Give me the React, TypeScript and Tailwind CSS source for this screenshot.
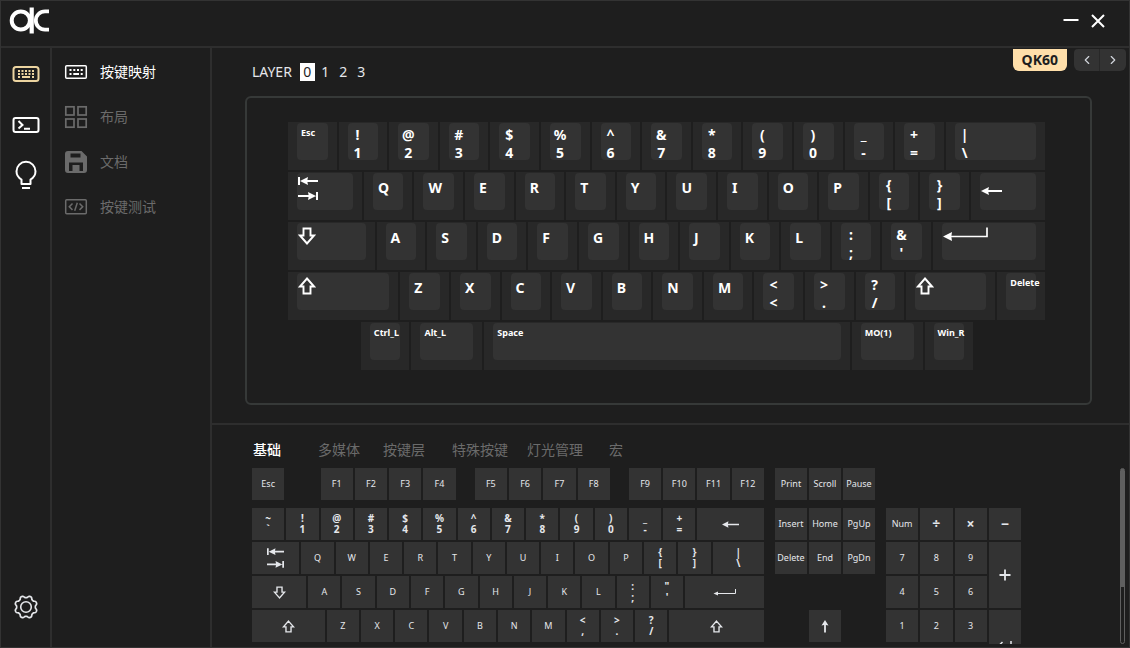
import { ReactNode, useState } from "react"
import clsx from "clsx"
import { ChevronLeft, ChevronRight } from "lucide-react"

type KeyDef = [legend: string, width?: number]

const layoutRows: KeyDef[][] = [
  [["Esc"], ["!\n1"], ["@\n2"], ["#\n3"], ["$\n4"], ["%\n5"], ["^\n6"], ["&\n7"], ["*\n8"], ["(\n9"], [")\n0"], ["_\n-"], ["+\n="], ["|\n\\", 2]],
  [["icon:tab", 1.5], ["Q"], ["W"], ["E"], ["R"], ["T"], ["Y"], ["U"], ["I"], ["O"], ["P"], ["{\n["], ["}\n]"], ["icon:back", 1.5]],
  [["icon:caps", 1.75], ["A"], ["S"], ["D"], ["F"], ["G"], ["H"], ["J"], ["K"], ["L"], [":\n;"], ["&\n'"], ["icon:enter", 2.25]],
  [["icon:shift", 2.22], ["Z"], ["X"], ["C"], ["V"], ["B"], ["N"], ["M"], ["<\n<"], [">\n."], ["?\n/"], ["icon:shift", 1.8], ["Delete", 0.98]],
  [["", 1.44], ["Ctrl_L"], ["Alt_L", 1.44], ["Space", 7.26], ["MO(1)", 1.44], ["Win_R"], ["", 1.42]],
]

const functionRow: KeyDef[] = [
  ["Esc"], ["", 1], ["F1"], ["F2"], ["F3"], ["F4"], ["", 0.5], ["F5"], ["F6"], ["F7"], ["F8"], ["", 0.5], ["F9"], ["F10"], ["F11"], ["F12"],
]

const mainRows: KeyDef[][] = [
  [["~\n`"], ["!\n1"], ["@\n2"], ["#\n3"], ["$\n4"], ["%\n5"], ["^\n6"], ["&\n7"], ["*\n8"], ["(\n9"], [")\n0"], ["_\n-"], ["+\n="], ["icon:back", 2]],
  [["icon:tab", 1.44], ["Q"], ["W"], ["E"], ["R"], ["T"], ["Y"], ["U"], ["I"], ["O"], ["P"], ["{\n["], ["}\n]"], ["|\n\\", 1.56]],
  [["icon:caps", 1.64], ["A"], ["S"], ["D"], ["F"], ["G"], ["H"], ["J"], ["K"], ["L"], [":\n;"], ["\"\n'"], ["icon:enter", 2.36]],
  [["icon:shift", 2.18], ["Z"], ["X"], ["C"], ["V"], ["B"], ["N"], ["M"], ["<\n,"], [">\n."], ["?\n/"], ["icon:shift", 2.82]],
]

const navRows: KeyDef[][] = [
  [["Insert"], ["Home"], ["PgUp"]],
  [["Delete"], ["End"], ["PgDn"]],
  [["", 3]],
  [[""], ["icon:up"], [""]],
]

const padKeys = ["Num", "÷", "×", "−", "7", "8", "9", "icon:plus", "4", "5", "6", "1", "2", "3", "icon:return"]

const menu = [
  { label: "按键映射", icon: <KeymapIcon /> },
  { label: "布局", icon: <GridIcon /> },
  { label: "文档", icon: <SaveIcon /> },
  { label: "按键测试", icon: <CodeIcon /> },
]

const tabs = [
  { label: "基础", width: "w-[65px]" },
  { label: "多媒体", width: "w-[65px]" },
  { label: "按键层", width: "w-[69px]" },
  { label: "特殊按键", width: "w-[75px]" },
  { label: "灯光管理", width: "w-[82px]" },
  { label: "宏", width: "w-[65px]" },
]

function rowWidth(keys: KeyDef[]) {
  return keys.reduce((sum, [, width = 1]) => sum + width, 0)
}

function Logo() {
  return (
    <svg width="40" height="27" viewBox="0 0 40 27" fill="none" stroke="#fff">
      <circle cx="11.800" cy="13.500" r="9.100" strokeWidth="4" />
      <path d="M22.700 .5v26" strokeWidth="4.200" />
      <path d="M40 4.300h-4a9.200 9.200 0 0 0 0 18.400h4" strokeWidth="3.800" />
    </svg>
  )
}

function KeyboardIcon() {
  return (
    <svg width="28" height="18" viewBox="0 0 28 18" fill="none" stroke="currentColor">
      <rect x="1.5" y="2" width="25" height="14" rx="2.5" strokeWidth="2" />
      <path d="M6 6h16M6 9h16" strokeWidth="1.8" strokeDasharray="2 1.5" />
      <path d="M6 12h2M10 12h8M20 12h2" strokeWidth="1.8" />
    </svg>
  )
}

function TerminalIcon() {
  return (
    <svg width="28" height="18" viewBox="0 0 28 18" fill="none" stroke="currentColor" strokeWidth="2">
      <rect x="1.5" y="2" width="25" height="14" rx="2" />
      <path d="M6.5 5 10.500 9l-4 3.500M12 12.800h6" />
    </svg>
  )
}

function BulbIcon() {
  return (
    <svg width="22" height="30" viewBox="0 0 22 30" fill="none" stroke="currentColor" strokeWidth="2">
      <path d="M6.500 24v-4.500C3.500 17.800 1.500 15 1.500 11.300a9.500 9.500 0 0 1 19 0c0 3.700-2 6.500-5 8.200V24z" strokeLinejoin="round" />
      <path d="M7 28h8" />
    </svg>
  )
}

function GearIcon() {
  // eight rounded teeth with a notch at the top
  const points = Array.from({ length: 96 }, (_, i) => {
    const a = (i / 96) * Math.PI * 2
    const wave = Math.tanh(-1.8 * Math.cos(8 * a))
    const r = 10.3 + wave * 1
    return `${(13 + r * Math.sin(a)).toFixed(2)},${(13 - r * Math.cos(a)).toFixed(2)}`
  })
  return (
    <svg width="26" height="26" viewBox="0 0 26 26" fill="none" stroke="currentColor">
      <polygon points={points.join(" ")} strokeWidth="1.7" strokeLinejoin="round" />
      <circle cx="13" cy="13" r="5.3" strokeWidth="1.6" />
    </svg>
  )
}

function KeymapIcon() {
  return (
    <svg width="24" height="24" viewBox="0 0 24 24" fill="none" stroke="currentColor">
      <rect x="1.700" y="5.700" width="20.600" height="12.600" rx="1" strokeWidth="1.500" />
      <path d="M5.500 10h2M9.300 10h2M13 10h2M16.700 10h2M5.500 14h2M9.300 14h5.700M16.700 14h2" strokeWidth="2" />
    </svg>
  )
}

function GridIcon() {
  return (
    <svg width="24" height="24" viewBox="0 0 24 24" fill="none" stroke="currentColor" strokeWidth="1.700">
      <rect x="1.800" y="1.800" width="8.200" height="8.200" />
      <rect x="14" y="1.800" width="8.200" height="8.200" />
      <rect x="1.800" y="14" width="8.200" height="8.200" />
      <rect x="14" y="14" width="8.200" height="8.200" />
    </svg>
  )
}

function SaveIcon() {
  return (
    <svg width="24" height="24" viewBox="0 0 24 24" fill="currentColor" fillRule="evenodd">
      <path d="M4 1h13.500L23 6.500V20a3 3 0 0 1-3 3H4a3 3 0 0 1-3-3V4a3 3 0 0 1 3-3zM6.500 3.500v4h10v-4zM5 12.500V21h3.500v-6h7v6H19v-8.500z" />
      <path d="M11 17h2.500v4H11z" />
    </svg>
  )
}

function CodeIcon() {
  return (
    <svg width="24" height="24" viewBox="0 0 24 24" fill="none" stroke="currentColor" strokeWidth="1.500">
      <rect x="1.700" y="4.700" width="20.600" height="14" rx="1" />
      <path d="M8.500 8.500 5.300 11.700l3.200 3.200M15.500 8.500l3.200 3.200-3.200 3.200M13.300 7.700l-2.600 8" />
    </svg>
  )
}

// big icons are for the board, small ones for the key picker
function KeyIcon({ name, small }: { name: string; small?: boolean }) {
  switch (name) {
    case "tab":
      return (
        <svg width={small ? 17 : 20} height={small ? 20 : 23} viewBox="0 0 20 23" fill="currentColor">
          <path d="M0 0h2v8H0zM2 4l8-4-.6 3H20v2H9.400l.6 3zM18 15h2v8h-2zM18 19l-8-4 .6 3H0v2h10.600l-.6 3z" />
        </svg>
      )
    case "back":
      return (
        <svg width={small ? 17 : 21} height={small ? 7 : 8} viewBox="0 0 21 8" fill="currentColor">
          <path d="M0 4 8 0l-.7 3H21v2H7.300L8 8z" />
        </svg>
      )
    case "caps":
    case "shift":
      return (
        <svg
          width={small ? 13 : 18}
          height={small ? 13 : 18}
          viewBox="0 0 18 18"
          fill="none"
          stroke="currentColor"
          strokeWidth="1.900"
          className={clsx(name === "caps" && "rotate-180")}
        >
          <path d="M9 1.500 16 9.500h-3.500v7h-7v-7H2z" />
        </svg>
      )
    case "enter":
      return small ? (
        <svg width="24" height="8" viewBox="0 0 24 8" fill="none" stroke="currentColor">
          <path d="M22.500 1v4.500H4" />
          <path d="M.5 5.500 5 3.500v4z" fill="currentColor" stroke="none" />
        </svg>
      ) : (
        <svg width="46" height="14" viewBox="0 0 46 14" fill="none" stroke="currentColor">
          <path d="M44 .5V9.500H7" strokeWidth="1.700" />
          <path d="M0 9.500 9 5l-.7 4.500.7 4.500z" fill="currentColor" stroke="none" />
        </svg>
      )
    case "return":
      return (
        <svg width="14" height="10" viewBox="0 0 14 10" fill="none" stroke="currentColor" strokeWidth="1.500">
          <path d="M13 3v4.500H2M4.500 4 1 7.500 4.500 10" />
        </svg>
      )
    case "up":
      return (
        <svg width="8" height="13" viewBox="0 0 8 13" fill="currentColor">
          <path d="M4 0 7.500 5.500 4.900 5v7.500H3.100V5L.5 5.500z" />
        </svg>
      )
    default:
      return (
        <svg width="12" height="12" viewBox="0 0 12 12" stroke="currentColor" strokeWidth="1.800">
          <path d="M6 .5v11M.5 6h11" />
        </svg>
      )
  }
}

const iconOffset: Record<string, string> = {
  tab: "pt-1",
  back: "pt-[14px]",
  caps: "pt-1",
  shift: "pt-1",
  enter: "pt-1",
}

function BoardLegend({ legend }: { legend: string }) {
  if (legend.startsWith("icon:")) {
    const name = legend.slice(5)
    return (
      <span className={clsx("block pl-px", iconOffset[name])}>
        <KeyIcon name={name} />
      </span>
    )
  }
  if (legend.includes("\n")) {
    return <span className="block w-5 pt-[3px] text-center text-sm leading-[18px] font-bold whitespace-pre">{legend}</span>
  }
  if (legend.length > 1) {
    return <span className="block pt-1 pl-1 text-[9px] leading-3 font-bold whitespace-nowrap">{legend}</span>
  }
  return <span className="block pt-1.5 pl-[5px] text-sm leading-[18px] font-bold">{legend}</span>
}

function BoardRow({ keys }: { keys: KeyDef[] }) {
  const total = rowWidth(keys)

  return (
    <div className="flex">
      {keys.map(([legend, width = 1], index) => (
        <div key={index} className="pr-0.5" style={{ width: `${(width / total) * 100}%` }}>
          {legend && (
            <button className="flex h-12 w-full flex-col bg-[#282828] px-[9px] pt-px">
              <span className="block h-[37px] w-full rounded-sm bg-[#333333] text-left">
                <BoardLegend legend={legend} />
              </span>
            </button>
          )}
        </div>
      ))}
    </div>
  )
}

function PickerKey({ legend, className }: { legend: string; className?: string }) {
  let content: ReactNode = legend
  if (legend.startsWith("icon:")) content = <KeyIcon name={legend.slice(5)} small />

  return (
    <button
      className={clsx(
        "flex w-full items-center justify-center bg-[#333333] whitespace-pre",
        legend.includes("\n") && "text-center text-[10px] leading-[11px] font-bold",
        "÷×−".includes(legend) && "text-sm leading-4 font-bold",
        !legend.includes("\n") && !"÷×−".includes(legend) && "text-[9px] leading-3",
        className ?? "h-8"
      )}
    >
      {content}
    </button>
  )
}

function PickerRow({ keys }: { keys: KeyDef[] }) {
  const total = rowWidth(keys)

  return (
    <div className="flex h-8">
      {keys.map(([legend, width = 1], index) => (
        <div key={index} className="pr-0.5" style={{ width: `${(width / total) * 100}%` }}>
          {legend && <PickerKey legend={legend} />}
        </div>
      ))}
    </div>
  )
}

export default function App() {
  const [layer, setLayer] = useState(0)
  const [activeMenu, setActiveMenu] = useState(0)
  const [activeTab, setActiveTab] = useState(0)

  return (
    <div className="flex h-screen flex-col overflow-hidden border border-[#333333] bg-[#1e1e1e] font-['Noto_Sans','Noto_Sans_CJK_SC',sans-serif] text-white">
      <header className="flex h-[47px] shrink-0 items-center justify-between border-b-2 border-[#2e2e2e] pr-5 pb-1.5 pl-2">
        <Logo />
        <div className="flex items-center gap-3 pr-1">
          <button aria-label="Minimize">
            <svg width="16" height="16" viewBox="0 0 16 16" stroke="currentColor" strokeWidth="2">
              <path d="M.5 7h15" />
            </svg>
          </button>
          <button aria-label="Close">
            <svg width="14" height="14" viewBox="0 0 14 14" stroke="currentColor" strokeWidth="2">
              <path d="m1 1 12 12M13 1 1 13" />
            </svg>
          </button>
        </div>
      </header>

      <div className="flex min-h-0 flex-1">
        <nav className="flex w-[51px] shrink-0 flex-col items-center justify-between border-r-2 border-[#2e2e2e] pt-[17px] pb-[27px]">
          <div className="flex flex-col items-center">
            <button aria-label="Keyboard" className="text-[#ecd4a0]">
              <KeyboardIcon />
            </button>
            <button aria-label="Macro" className="pt-[33px]">
              <TerminalIcon />
            </button>
            <button aria-label="Lighting" className="pt-[26px]">
              <BulbIcon />
            </button>
          </div>
          <button aria-label="Settings" className="text-gray-200">
            <GearIcon />
          </button>
        </nav>

        <aside className="flex w-[160px] shrink-0 flex-col gap-[21px] border-r-2 border-[#2e2e2e] pt-3 pl-3">
          {menu.map(({ label, icon }, index) => (
            <button
              key={label}
              onClick={() => setActiveMenu(index)}
              className={clsx(
                "flex h-6 items-center gap-3 text-sm leading-5",
                activeMenu === index ? "text-white" : "text-[#6b6b6b]"
              )}
            >
              {icon}
              {label}
            </button>
          ))}
        </aside>

        <main className="flex min-w-0 flex-1 flex-col">
          <section className="border-b-2 border-[#2e2e2e] pb-[18px] pl-[33px]">
            <div className="flex h-12 items-start justify-between pr-[3px]">
              <div className="flex items-center pt-[15px] pl-[7px] text-sm leading-[18px] text-gray-200">
                <span className="pr-2">LAYER</span>
                <div className="flex gap-[3px]">
                  {[0, 1, 2, 3].map((n) => (
                    <button
                      key={n}
                      onClick={() => setLayer(n)}
                      className={clsx("h-[18px] w-[15px]", layer === n && "bg-white text-[#1e1e1e]")}
                    >
                      {n}
                    </button>
                  ))}
                </div>
              </div>
              <div className="flex gap-[7px] pt-px">
                <span className="rounded-b-md bg-[#ffdfaa] px-[9px] text-sm leading-[22px] font-bold text-[#1e1e1e]">QK60</span>
                <div className="flex h-[22px] divide-x divide-[#282828] overflow-hidden rounded-md rounded-t-sm bg-[#333333] text-gray-300">
                  <button aria-label="Previous" className="flex w-[26px] items-center justify-center">
                    <ChevronLeft size={14} />
                  </button>
                  <button aria-label="Next" className="flex w-[26px] items-center justify-center">
                    <ChevronRight size={14} />
                  </button>
                </div>
              </div>
            </div>

            <div className="mr-[37px] flex flex-col gap-0.5 rounded-md border-2 border-[#363938] pt-6 pr-[43px] pb-[33px] pl-[41px]">
              {layoutRows.map((row, index) => (
                <BoardRow key={index} keys={row} />
              ))}
            </div>
          </section>

          <section className="flex min-h-0 flex-1 flex-col pt-[15px] pb-[3px] pl-10">
            <div className="flex shrink-0 pl-px text-sm leading-5">
              {tabs.map(({ label, width }, index) => (
                <button
                  key={label}
                  onClick={() => setActiveTab(index)}
                  className={clsx("text-left", width, activeTab === index ? "font-medium text-white" : "text-[#6b6b6b]")}
                >
                  {label}
                </button>
              ))}
            </div>

            <div className="mt-2 flex min-h-0 flex-1 justify-between pr-1">
              <div className="flex gap-[9px] overflow-hidden text-gray-200">
                <div className="flex w-[514px] flex-col gap-0.5">
                  <PickerRow keys={functionRow} />
                  <div className="flex flex-col gap-0.5 pt-1.5">
                    {mainRows.map((row, index) => (
                      <PickerRow key={index} keys={row} />
                    ))}
                  </div>
                </div>
                <div className="flex w-[102px] flex-col gap-0.5">
                  <PickerRow keys={[["Print"], ["Scroll"], ["Pause"]]} />
                  <div className="flex flex-col gap-0.5 pt-1.5">
                    {navRows.map((row, index) => (
                      <PickerRow key={index} keys={row} />
                    ))}
                  </div>
                </div>
                <div className="grid w-[135px] grid-cols-4 content-start gap-0.5 pt-10">
                  {padKeys.map((legend) => {
                    const tall = legend === "icon:plus" || legend === "icon:return"
                    return (
                      <div key={legend} className={clsx(tall && "col-start-4 row-span-2")}>
                        <PickerKey legend={legend} className={tall ? "h-[66px]" : "h-8"} />
                      </div>
                    )
                  })}
                </div>
              </div>
              <div className="flex w-[5px] flex-col rounded-sm border border-[#5f5f5f]">
                <div className="h-[68%] bg-[#5f5f5f]" />
              </div>
            </div>
          </section>
        </main>
      </div>
    </div>
  )
}
